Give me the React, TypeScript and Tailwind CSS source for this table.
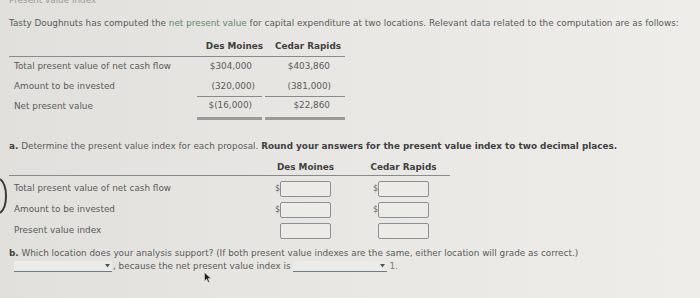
const font = { fontFamily: '"DejaVu Sans", Verdana, sans-serif' };

function AnswerBox({ dollar = false }: { dollar?: boolean }) {
   return (
      <div className="flex items-center">
         <span className={`w-[5px] text-[8px] ${dollar ? 'text-[#666]' : 'text-transparent'}`}>$</span>
         <div className="w-[51px] h-[16px] rounded-[2px] border border-[#8c8f94] bg-[#ecebe8]" />
      </div>
   );
}

function Dropdown({ width }: { width: string }) {
   return (
      <div className={`${width} h-[11px] flex items-center justify-end border-b border-[#6f7b8a] bg-[#ecebe8] pr-[2px]`}>
         <svg width="5" height="4" viewBox="0 0 5 4">
            <path d="M0 0 H5 L2.5 3.5 Z" fill="#555" />
         </svg>
      </div>
   );
}

export default function App() {
   return (
      <div
         style={font}
         className="relative w-[700px] h-[298px] overflow-hidden bg-gradient-to-r from-[#e2e0dc] via-[#e9e7e3] to-[#efedea] text-[8.85px] text-[#5a5a5a]"
      >
         {/* previous question, scrolled mostly out of view */}
         <div className="h-[5px] overflow-hidden pl-[9px]">
            <div className="-mt-[4px] leading-[9px] text-[#9a9a9a]">Present value index</div>
         </div>

         <div className="pl-[9px] pt-[13px] leading-[10px] whitespace-nowrap">
            Tasty Doughnuts has computed the <span className="text-[#5d8a6c]">net present value</span> for capital expenditure at two locations. Relevant data related to the computation are as follows:
         </div>

         {/* given data */}
         <div className="ml-[9px] mt-[10px] w-[336px]">
            <div className="flex h-[19px] items-center border-b border-[#8a8a8a] font-bold text-[#404040]">
               <div className="w-[188px]" />
               <div className="w-[67px] pr-[1px] text-right">Des Moines</div>
               <div className="w-[81px] pr-[4px] text-right">Cedar Rapids</div>
            </div>
            <div className="flex h-[20px] items-center">
               <div className="w-[188px] pl-[5px]">Total present value of net cash flow</div>
               <div className="w-[65px] pr-[10px] text-right">$304,000</div>
               <div className="ml-[3px] w-[80px] pr-[15px] text-right">$403,860</div>
            </div>
            <div className="flex h-[20px]">
               <div className="w-[188px] pl-[5px] flex items-center">Amount to be invested</div>
               <div className="w-[65px] pr-[7px] flex items-center justify-end border-b border-[#8a8a8a]">(320,000)</div>
               <div className="ml-[3px] w-[80px] pr-[14px] flex items-center justify-end border-b border-[#8a8a8a]">(381,000)</div>
            </div>
            <div className="flex h-[23px]">
               <div className="w-[188px] pl-[5px] pb-[3px] flex items-center">Net present value</div>
               <div className="w-[65px] pr-[10px] pb-[3px] flex items-center justify-end border-b-[3px] border-[#9a9a9a]">$(16,000)</div>
               <div className="ml-[3px] w-[80px] pr-[15px] pb-[3px] flex items-center justify-end border-b-[3px] border-[#9a9a9a]">$22,860</div>
            </div>
         </div>

         {/* part a */}
         <div className="pl-[9px] mt-[21px] leading-[10px] whitespace-nowrap">
            <span className="font-bold text-[#404040]">a.</span> Determine the present value index for each proposal.{' '}
            <span className="font-bold text-[#404040]">Round your answers for the present value index to two decimal places.</span>
         </div>

         <div className="ml-[9px] mt-[11px] w-[441px]">
            <div className="flex h-[12px] items-center border-b border-[#8a8a8a] pb-[1px] font-bold text-[#404040] box-content">
               <div className="w-[261px]" />
               <div className="w-[64px] pr-[3px] flex justify-end">
                  <div className="w-[51px] flex justify-center whitespace-nowrap">Des Moines</div>
               </div>
               <div className="w-[100px] pr-[5px] flex justify-end">
                  <div className="w-[51px] flex justify-center whitespace-nowrap">Cedar Rapids</div>
               </div>
            </div>
            <div className="pt-[2px]">
               {[
                  { label: 'Total present value of net cash flow', dollar: true },
                  { label: 'Amount to be invested', dollar: true },
                  { label: 'Present value index', dollar: false },
               ].map(row => (
                  <div key={row.label} className="flex h-[21px] items-center">
                     <div className="w-[261px] pl-[5px]">{row.label}</div>
                     <div className="w-[64px] pr-[3px] flex justify-end">
                        <AnswerBox dollar={row.dollar} />
                     </div>
                     <div className="w-[100px] pr-[5px] flex justify-end">
                        <AnswerBox dollar={row.dollar} />
                     </div>
                  </div>
               ))}
            </div>
         </div>

         {/* part b */}
         <div className="pl-[9px] mt-[7px] leading-[10px] whitespace-nowrap">
            <span className="font-bold text-[#404040]">b.</span> Which location does your analysis support? (If both present value indexes are the same, either location will grade as correct.)
         </div>
         <div className="pl-[14px] mt-[2px] flex items-center whitespace-nowrap">
            <Dropdown width="w-[98px]" />
            <span className="ml-[1px]">, because the net present value index is</span>
            <span className="ml-[2px]"><Dropdown width="w-[94px]" /></span>
            <span className="ml-[3px] text-[#7a7a7a]">1.</span>
         </div>

         {/* edge of the round control peeking in from the left */}
         <svg className="absolute left-0 top-[177px]" width="8" height="38" viewBox="0 0 8 38">
            <path d="M0 2 C8 8 8 30 0 36" fill="none" stroke="#3a3a3a" strokeWidth="2" />
         </svg>

         {/* mouse pointer */}
         <svg className="absolute left-[204px] top-[272px]" width="8" height="11" viewBox="0 0 8 11">
            <path d="M0.5 0.5 L0.5 9 L2.6 7 L4.2 10.3 L5.5 9.7 L4 6.6 L7 6.6 Z" fill="#1e1e1e" stroke="#d8d8d8" strokeWidth="0.6" />
         </svg>
      </div>
   );
}
